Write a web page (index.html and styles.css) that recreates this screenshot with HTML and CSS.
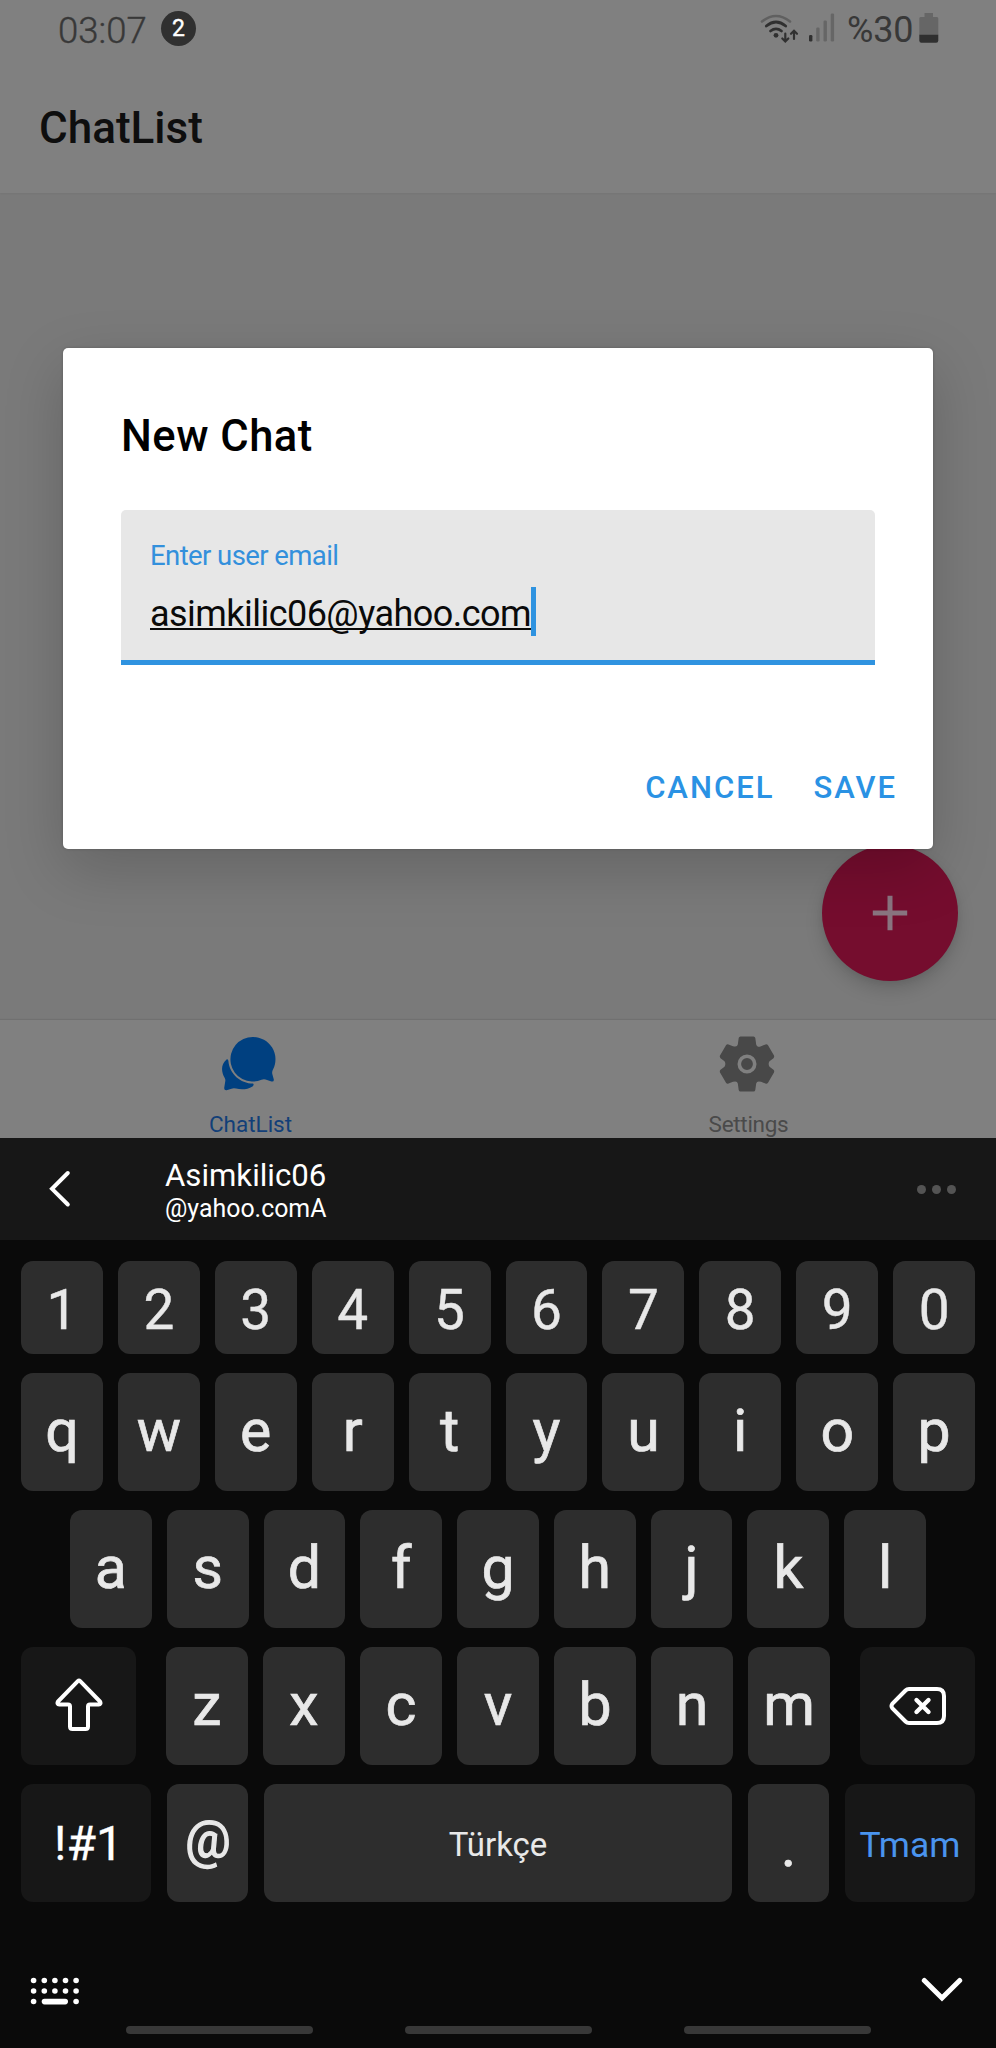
FILE: index.html
```
<!DOCTYPE html>
<html lang="tr">
<head>
<meta charset="utf-8">
<title>ChatList</title>
<link rel="stylesheet" href="styles.css">
</head>
<body>
<div class="phone">
  <main class="app">
    <header class="header">
      <div class="status">
        <span class="time">03:07</span>
        <span class="count">2</span>
        <svg class="wifi" width="40" height="34" viewBox="0 0 40 34" fill="none" stroke-linecap="round">
          <path d="M2 8.5Q16 -2.5 30 8.5" stroke="#606060" stroke-width="2.6"/>
          <path d="M6.3 13Q16 5 25.700 13M10.500 18Q16 13.800 21.500 18" stroke="#303030" stroke-width="2.800"/>
          <circle cx="16" cy="22.300" r="2.400" fill="#303030"/>
          <path d="M25.300 20.500V28M22.300 25.500L25.300 28.500L28.300 25.500M34 26V18M31 20.800L34 17.800L37 20.800" stroke="#303030" stroke-width="2.200"/>
        </svg>
        <svg class="signal" width="26" height="30" viewBox="0 0 26 30">
          <rect x="0" y="22" width="3.400" height="6.500" rx="1.200" fill="#303030"/>
          <g fill="#666"><rect x="7.200" y="14.500" width="3.400" height="14" rx="1.200"/><rect x="14.500" y="7.500" width="3.400" height="21" rx="1.200"/><rect x="21.700" y=".5" width="3.400" height="28" rx="1.200"/></g>
        </svg>
        <span class="percent">%30</span>
        <svg class="battery" width="20" height="30" viewBox="0 0 20 30">
          <path d="M5.500 0H14V4H18Q19.300 4 19.300 5.500V22H.3V5.500Q.3 4 1.600 4H5.500Z" fill="#666"/>
          <path d="M.3 21.700H19.300V27.500Q19.300 29.700 17.200 29.700H2.400Q.3 29.700 .3 27.500Z" fill="#303030"/>
        </svg>
      </div>
      <h1 class="title">ChatList</h1>
    </header>
    <section class="content"></section>
    <nav class="tabs">
      <a class="tab tab-active">
        <svg class="tab-icon" width="56" height="56" viewBox="0 0 56 56" fill="#004080">
          <path d="M32 1A22.300 22.300 0 0 1 52 33.500Q50.800 35.500 51.300 38L52.800 43.500Q53.100 46 50.500 45.500L44.500 43.500Q42.500 43 40.500 43.800A22.300 22.300 0 1 1 32 1Z"/>
          <path d="M5.500 23.400Q7.300 22.800 7.400 25C8.500 38 19.500 47.500 32 47.600Q33.500 48.500 31.500 50.500C26.500 53.500 20.500 54 15 52.500Q12.500 51.800 10.500 52.700L5.500 54.300Q3 54.500 3.200 52L4.300 45Q4.600 43.400 3.600 41.800C.3 36 -.5 28.500 5.500 23.400Z"/>
        </svg>
        <span class="tab-label">ChatList</span>
      </a>
      <a class="tab">
        <svg class="tab-icon" width="56" height="56" viewBox="0 0 56 56" fill="#484848">
          <path d="M21.500 .5H34.500Q36 .5 36.300 2L37.200 8.500Q37.500 10 39 10.700Q40.500 11 42 10.200L46.500 8.400Q48 7.800 49 9.200L55 19.500Q55.600 21 54.500 22.200L50.500 25.300Q48.800 28 50.500 30.700L54.500 33.800Q55.600 35 55 36.500L49 46.800Q48 48.200 46.500 47.600L42 45.800Q37.800 44.500 37.200 47.500L36.300 54Q36 55.500 34.500 55.500H21.500Q20 55.500 19.700 54L18.800 47.500Q18.200 44.500 14 45.800L9.500 47.600Q8 48.200 7 46.800L1 36.500Q.4 35 1.500 33.800L5.500 30.700Q7.200 28 5.500 25.300L1.500 22.200Q.4 21 1 19.500L7 9.200Q8 7.800 9.500 8.400L14 10.200Q18.200 11.500 18.800 8.500L19.700 2Q20 .5 21.500 .5Z"/>
          <circle cx="28" cy="28" r="7.700" fill="none" stroke="#808080" stroke-width="3.600"/>
        </svg>
        <span class="tab-label tab-label-long">Settings</span>
      </a>
    </nav>
    <button class="fab">
      <svg width="36" height="36" viewBox="0 0 36 36"><path d="M18 .8V35.200M.8 18H35.200" stroke="#8a7580" stroke-width="5"/></svg>
    </button>
    <div class="dialog">
      <h2 class="dialog-title">New Chat</h2>
      <div class="field">
        <label class="field-label">Enter user email</label>
        <div class="field-row"><span class="field-value">asimkilic06@yahoo.com</span><i class="caret"></i></div>
      </div>
      <div class="actions"><span class="cancel">CANCEL</span><span class="save">SAVE</span></div>
    </div>
  </main>

  <section class="keyboard">
    <div class="suggest">
      <svg class="back" width="22" height="38" viewBox="0 0 22 38"><path d="M18.800 3L3 18.800L18.800 34.500" fill="none" stroke="#fff" stroke-width="4" stroke-linecap="round"/></svg>
      <div class="word"><span class="word-main">Asimkilic06</span><span class="word-sub">@yahoo.comA</span></div>
      <div class="more"><i></i><i></i><i></i></div>
    </div>
    <div class="keys">
      <div class="row row-digits"><b>1</b><b>2</b><b>3</b><b>4</b><b>5</b><b>6</b><b>7</b><b>8</b><b>9</b><b>0</b></div>
      <div class="row"><b>q</b><b>w</b><b>e</b><b>r</b><b>t</b><b>y</b><b>u</b><b>i</b><b>o</b><b>p</b></div>
      <div class="row row-home"><b>a</b><b>s</b><b>d</b><b>f</b><b>g</b><b>h</b><b>j</b><b>k</b><b>l</b></div>
      <div class="row row-shift">
        <b class="dark edge"><svg width="48" height="54" viewBox="0 0 48 54"><path d="M22.800 3.200Q24 2 25.200 3.200L45 23.500Q46.500 26.200 43.500 26.600H35Q33 26.600 33 28.600V48.500Q33 51 30.500 51H17.500Q15 51 15 48.500V28.600Q15 26.600 13 26.600H4.500Q1.500 26.200 3 23.500Z" fill="none" stroke="#fff" stroke-width="4"/></svg></b>
        <div class="middle"><b>z</b><b>x</b><b>c</b><b>v</b><b>b</b><b>n</b><b>m</b></div>
        <b class="dark edge"><svg class="bksp" width="58" height="40" viewBox="0 0 58 40" fill="none" stroke="#fff" stroke-width="4"><path d="M20 3H48Q55 3 55 10V30Q55 37 48 37H20Q18 37 16.500 35.500L3.500 22.500Q1.500 20 3.500 17.500L16.500 4.500Q18 3 20 3Z"/><path d="M27.500 14L39.500 26M39.500 14L27.500 26" stroke-width="4.400" stroke-linecap="round"/></svg></b>
      </div>
      <div class="row row-bottom"><b class="dark sym">!#1</b><b class="at">@</b><b class="space">Türkçe</b><b class="dot">.</b><b class="dark done">Tmam</b></div>
    </div>
    <div class="tools">
      <svg width="50" height="28" viewBox="0 0 50 28" fill="#fff">
        <g id="dots"><circle cx="3.600" cy="3.500" r="2.800"/><circle cx="14.300" cy="3.500" r="2.800"/><circle cx="24.900" cy="3.500" r="2.800"/><circle cx="35.500" cy="3.500" r="2.800"/><circle cx="46.100" cy="3.500" r="2.800"/></g>
        <use href="#dots" y="10.500"/>
        <circle cx="3.600" cy="24.500" r="2.800"/><circle cx="46.100" cy="24.500" r="2.800"/><rect x="11.700" y="21.700" width="26.300" height="5.700" rx="2.800"/>
      </svg>
      <svg width="42" height="26" viewBox="0 0 42 26"><path d="M3.300 3.500L21 21L38.700 3.500" fill="none" stroke="#fff" stroke-width="5" stroke-linecap="round"/></svg>
    </div>
    <div class="navbar"><i></i><i></i><i></i></div>
  </section>
</div>
</body>
</html>
```
FILE: styles.css
```
* { box-sizing: border-box; }
body { margin: 0; font-family: Roboto, "Liberation Sans", sans-serif; }
svg { display: block; flex: none; }
.phone { width: 996px; height: 2048px; display: flex; flex-direction: column; overflow: hidden; background: #0a0a0a; }

.app { position: relative; height: 1138px; flex: none; display: flex; flex-direction: column; background: #7a7a7a; overflow: hidden; }
.header { height: 193px; background: #808080; box-shadow: 0 1px 2px rgba(0,0,0,.05); }
.status { height: 58px; padding: 0 57px 0 58px; display: flex; align-items: flex-start; color: #383838; font-size: 36.500px; line-height: 42px; font-weight: 300; }
.time { width: 103px; padding-top: 10px; -webkit-text-stroke: .4px #383838; }
.count { width: 35px; height: 35px; margin-top: 11px; border-radius: 50%; background: #303030; color: #fff; font-size: 23px; line-height: 36px; font-weight: 400; text-align: center; -webkit-text-stroke: .4px #fff; }
.wifi { margin: 13px 0 0 auto; }
.signal { margin: 13px 0 0 9px; }
.percent { width: 72px; margin-left: 12px; padding-top: 9px; font-size: 36px; font-weight: 400; letter-spacing: -.2px; }
.battery { margin: 13px 0 0 0; }
.title { margin: 0; padding: 44px 0 0 39px; font-size: 44px; line-height: 52px; font-weight: 500; color: #0e0e0e; }
.content { flex: 1; }
.tabs { height: 118px; display: flex; background: #808080; box-shadow: 0 -1px 1px rgba(0,0,0,.08); }
.tab { flex: 1; display: flex; flex-direction: column; align-items: center; color: #4a4a4a; }
.tab-active { color: #123f78; }
.tab-icon { margin-top: 16px; margin-right: 1px; }
.tab-label { margin-top: 18px; margin-left: 3px; font-size: 22.500px; line-height: 28px; }
.tab-label-long { letter-spacing: -.3px; }

.fab { position: absolute; left: 822px; top: 845px; width: 136px; height: 136px; border: 0; padding: 0; border-radius: 50%; background: #750d2e; display: flex; align-items: center; justify-content: center; box-shadow: 0 9px 18px rgba(0,0,0,.14), 0 3px 6px rgba(0,0,0,.06); }

.dialog { position: absolute; left: 63px; top: 348px; width: 870px; height: 501px; padding: 61px 58px 0; border-radius: 5px; background: #fff; box-shadow: 0 0 3px rgba(0,0,0,.2), 0 20px 60px rgba(0,0,0,.18); }
.dialog-title { margin: 0; font-size: 43.500px; line-height: 56px; font-weight: 500; letter-spacing: .5px; color: #000; }
.field { height: 155px; margin-top: 45px; padding: 29px 29px 0; background: #e7e7e7; border-bottom: 5px solid #2f93e0; border-radius: 5px 5px 0 0; }
.field-label { display: block; color: #3390dc; font-size: 27.500px; line-height: 34px; letter-spacing: -.58px; }
.field-row { display: flex; margin-top: 14px; }
.field-value { height: 49px; font-size: 36px; line-height: 54px; letter-spacing: -.54px; color: #0a0a0a; text-decoration: underline; text-decoration-thickness: 2px; text-underline-offset: 2px; text-decoration-skip-ink: none; }
.caret { width: 5px; height: 49px; background: #2f93e0; }
.actions { display: flex; justify-content: flex-end; margin: 104px -22px 0 0; color: #2a92e4; font-size: 31px; line-height: 38px; font-weight: 500; letter-spacing: 2px; }
.save { margin-left: 39px; }

.keyboard { flex: 1; display: flex; flex-direction: column; color: #fff; }
.suggest { height: 102px; display: flex; align-items: flex-start; background: #171717; }
.back { margin: 32px 0 0 49px; }
.word { display: flex; flex-direction: column; margin: 19px 0 0 94px; }
.word-main { font-size: 31.200px; line-height: 38px; }
.word-sub { font-size: 24.900px; line-height: 28px; }
.more { display: flex; gap: 6px; margin: 47px 40px 0 auto; }
.more i { width: 9px; height: 9px; border-radius: 50%; background: #545454; }
.keys { height: 661px; padding: 21px 21px 0; display: grid; grid-template-rows: 92.500px 118px 118px 118px 118px; row-gap: 19px; color: #e8e8e8; }
.row { display: flex; gap: 15px; }
.row b { flex: 1; display: flex; align-items: center; justify-content: center; border-radius: 12px; background: #2d2d2d; font-size: 59px; line-height: 60px; font-weight: 400; padding-bottom: 2px; -webkit-text-stroke: .7px currentColor; }
.row-digits b { font-size: 55px; padding: 5px 0 0; -webkit-text-stroke-width: .4px; }
.row-home { padding: 0 49px; }
.row-shift { justify-content: space-between; gap: 0; }
.row b.dark { background: #171717; color: #fff; }
.row b.edge { flex: 0 0 115px; }
.middle { width: 664px; display: flex; gap: 15px; }
.bksp { margin-top: 2px; }
.row-bottom { gap: 16px; }
.row b.sym { flex: 0 0 130px; font-size: 48px; padding: 2px 0 0 5px; -webkit-text-stroke-width: .3px; }
.row b.at { flex: 0 0 81px; font-size: 51px; padding: 0 0 6px 1px; -webkit-text-stroke-width: 1.300px; }
.row b.space { font-size: 33px; padding: 5px 0 0; -webkit-text-stroke-width: 0; }
.row b.dot { flex: 0 0 81px; padding: 7px 0 0; }
.row b.done { flex: 0 0 130px; color: #4a94ee; font-size: 35.500px; padding: 5px 0 0; -webkit-text-stroke-width: 0; }
.tools { height: 125px; padding: 76px 33px 0 30px; display: flex; justify-content: space-between; align-items: flex-start; }
.navbar { display: flex; gap: 92px; padding: 0 0 0 126px; }
.navbar i { width: 187px; height: 8px; border-radius: 4px; background: #383838; }
```
